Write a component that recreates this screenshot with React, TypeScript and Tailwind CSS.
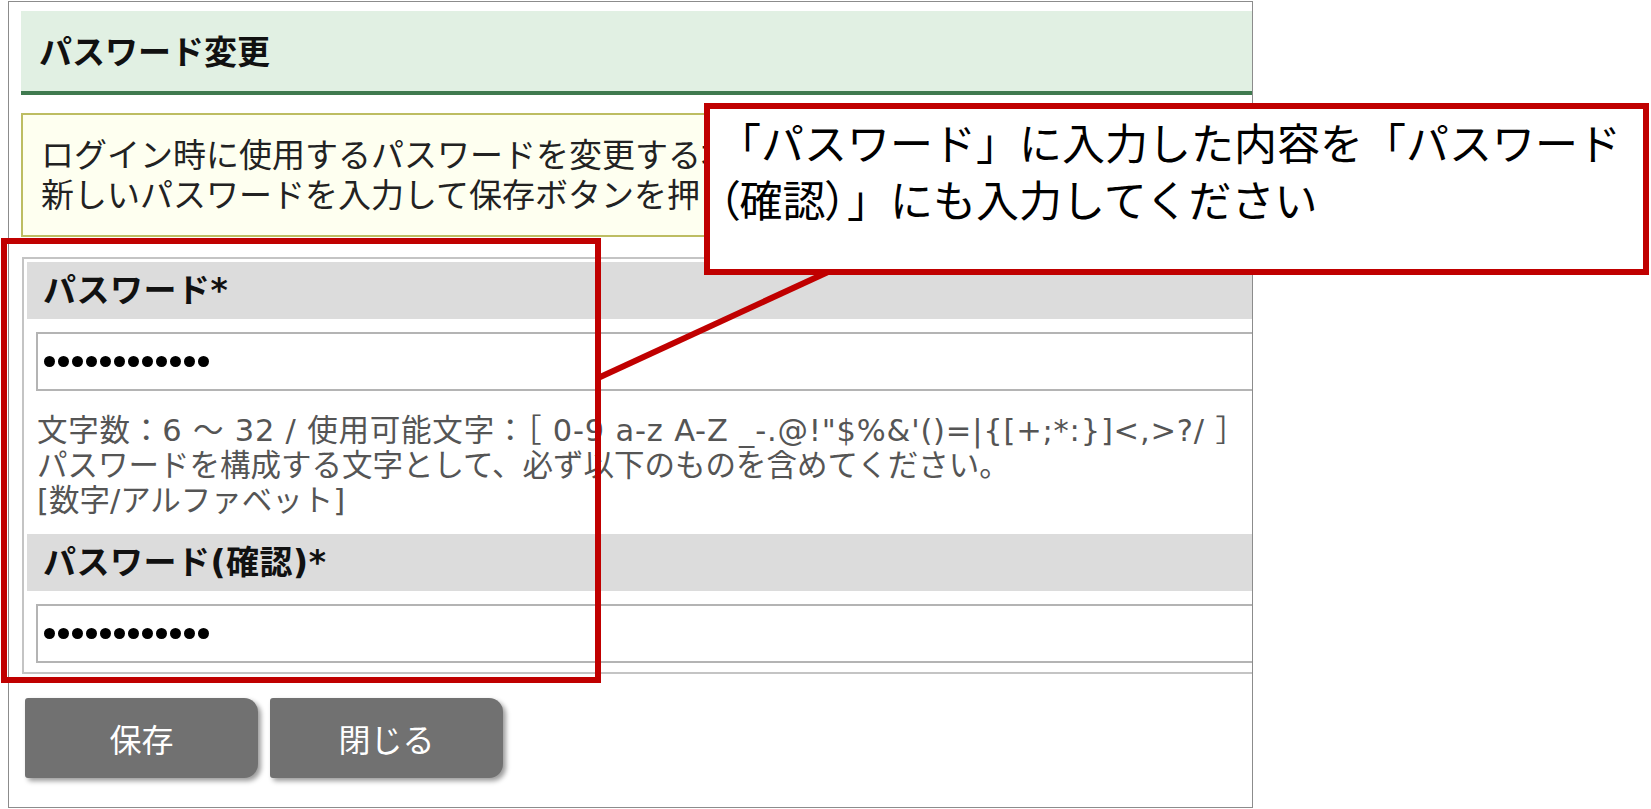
import React from "react";

const jp = { fontFamily: '"Noto Sans CJK JP", "Noto Sans", sans-serif' };
const mixed = { fontFamily: '"DejaVu Sans", "Noto Sans CJK JP", sans-serif' };

function Dots() {
  return (
    <div className="flex items-center gap-[3px]">
      {Array.from({ length: 12 }).map((_, i) => (
        <span key={i} className="h-[11px] w-[11px] rounded-full bg-black" />
      ))}
    </div>
  );
}

function Field({ label }: { label: string }) {
  return (
    <div>
      <div className="flex h-[57px] items-center bg-[#dcdcdc] pl-[16px] text-[33px] font-bold tracking-[0.5px] text-[#111]" style={mixed}>
        {label}
      </div>
      <div className="ml-[9px] mt-[13px] flex h-[59px] items-center border-2 border-[#b4b4b4] bg-white pl-[6px]">
        <Dots />
      </div>
    </div>
  );
}

export default function App() {
  return (
    <div className="relative h-[809px] w-[1651px] overflow-hidden bg-white" style={jp}>
      {/* page frame */}
      <div className="ml-[8px] mt-[1px] h-[807px] w-[1245px] overflow-hidden border border-[#8c8c8c] pl-[12px] pt-[9px]">
        <div className="w-[1300px]">
          <div className="flex h-[80px] items-center bg-[#e1f0e3] pl-[18px] text-[33px] font-bold text-[#111]">
            パスワード変更
          </div>
          <div className="h-[4px] bg-[#3f7a4f]" />

          <div className="mt-[18px] border-2 border-[#bdbd62] bg-[#fefff0] pb-[22px] pl-[18px] pt-[18px] text-[33px] leading-[40px] text-[#222]">
            ログイン時に使用するパスワードを変更する場合は、
            <br />
            新しいパスワードを入力して保存ボタンを押してください。
          </div>

          <div className="ml-[1px] mt-[20px] border-2 border-[#c4c4c4] p-[3px] pb-[9px]">
            <Field label="パスワード*" />
            <div className="ml-[10px] mt-[22px] text-[30.5px] leading-[35px] text-[#555]" style={mixed}>
              <div className="tracking-[0.8px]">文字数：6 ～ 32 / 使用可能文字：［ 0-9 a-z A-Z _-.@!"$%&amp;'()=|{"{"}[+;*:{"}"}]&lt;,&gt;?/ ］</div>
              <div>パスワードを構成する文字として、必ず以下のものを含めてください。</div>
              <div>[数字/アルファベット]</div>
            </div>
            <div className="mt-[16px]">
              <Field label="パスワード(確認)*" />
            </div>
          </div>

          <div className="ml-[4px] mt-[24px] flex gap-[12px]">
            <button className="h-[80px] w-[233px] rounded-l-[3px] rounded-r-[14px] bg-[#717171] text-[32px] text-white shadow-[3px_3px_5px_rgba(0,0,0,0.4)]">
              保存
            </button>
            <button className="h-[80px] w-[233px] rounded-l-[3px] rounded-r-[14px] bg-[#717171] text-[32px] text-white shadow-[3px_3px_5px_rgba(0,0,0,0.4)]">
              閉じる
            </button>
          </div>
        </div>
      </div>

      {/* highlight box */}
      <div className="absolute left-[1px] top-[238px] h-[445px] w-[600px] border-[6px] border-[#c00000]" />

      {/* callout tail */}
      <svg className="absolute left-[590px] top-[262px]" width="250" height="122" viewBox="0 0 250 122">
        <line x1="238" y1="10" x2="8" y2="116" stroke="#c00000" strokeWidth="6" />
      </svg>

      {/* callout */}
      <div className="absolute left-[704px] top-[103px] h-[172px] w-[945px] border-[6px] border-[#c00000] bg-white pl-[8px] pt-[4px] text-[43px] leading-[57px] text-black">
        「パスワード」に入力した内容を「パスワード
        <br />
        <span className="[font-feature-settings:'palt']">（確認）</span>」にも入力してください
      </div>
    </div>
  );
}
